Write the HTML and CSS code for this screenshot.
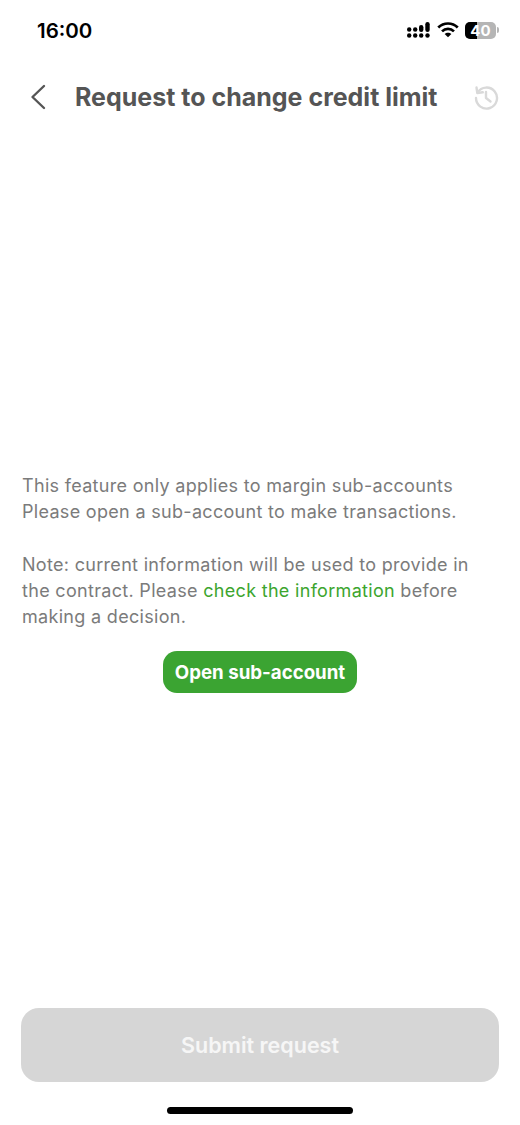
FILE: index.html
```html
<!DOCTYPE html>
<html lang="en">
<head>
    <meta charset="UTF-8">
    <meta name="viewport" content="width=device-width, initial-scale=1.0">
    <title>Request to change credit limit</title>
    <link rel="stylesheet" href="styles.css">
</head>
<body>
    <div class="screen">
        <div class="status">
            <span class="clock">16:00</span>
            <div class="status-icons">
                <svg class="signal" width="23" height="16" viewBox="0 0 23 16" fill="#000">
                    <circle cx="2.200" cy="13.500" r="2.200"/><circle cx="8.200" cy="13.500" r="2.200"/><circle cx="14.200" cy="13.500" r="2.200"/><circle cx="20.500" cy="13.500" r="2.200"/>
                    <circle cx="2.200" cy="7.500" r="2.200"/><circle cx="8.200" cy="7.500" r="2.200"/>
                    <rect x="12" y="3" width="4.400" height="7" rx="2.200"/>
                    <rect x="18.300" y="0" width="4.400" height="10" rx="2.200"/>
                </svg>
                <svg class="wifi" width="22" height="16" viewBox="0 0 21 15" fill="none" stroke="#000" stroke-width="2.600">
                    <path d="M1.200 5.200C6.500 0 14.500 0 19.800 5.200"/>
                    <path d="M4.800 8.800C8 5.700 13 5.700 16.200 8.800"/>
                    <path d="M10.500 14.500L7.300 11.400C9 9.700 12 9.700 13.700 11.400Z" fill="#000" stroke="none"/>
                </svg>
                <div class="battery">
                    <div class="battery-fill"></div>
                    <span class="battery-num">40</span>
                </div>
                <div class="battery-cap"></div>
            </div>
        </div>

        <div class="nav">
            <svg class="back" width="16" height="26" viewBox="0 0 16 26" fill="none" stroke="#555" stroke-width="2.400" stroke-linecap="round" stroke-linejoin="round">
                <path d="M14 2L2.500 13L14 24"/>
            </svg>
            <div class="title">Request to change credit limit</div>
            <svg class="history" width="26" height="26" viewBox="0 0 26 26" fill="none" stroke="#d9d9d9" stroke-width="2.400" stroke-linecap="round" stroke-linejoin="round">
                <path d="M4.600 8.500A10.500 10.500 0 1 1 3 14"/>
                <path d="M3.500 3.500L4.300 9L9.800 8.300"/>
                <path d="M13 8V14L17.500 17.500"/>
            </svg>
        </div>

        <div class="main">
            <p class="msg">This feature only applies to margin sub-accounts<br>Please open a sub-account to make transactions.</p>
            <p class="msg">Note: current information will be used to provide in the contract. Please <span class="link">check the information</span> before making a decision.</p>
            <button class="open-btn">Open sub-account</button>
        </div>

        <div class="footer">
            <button class="submit-btn">Submit request</button>
            <div class="home-bar"></div>
        </div>
    </div>
</body>
</html>
```

FILE: styles.css
```css
*{
    box-sizing:border-box;
}
html,body{
    margin:0;
    padding:0;
    background:#fff;
}
.screen{
    width:520px;
    height:1125px;
    display:flex;
    flex-flow:column nowrap;
    font-family:Inter,"Liberation Sans",sans-serif;
    overflow:hidden;
}
.status{
    height:60px;
    padding:0 21px 0 37px;
    display:flex;
    justify-content:space-between;
    align-items:center;
}
.clock{
    font-size:20.500px;
    font-weight:600;
    color:#000;
}
.status-icons{
    display:flex;
    align-items:center;
}
.signal{
    margin-right:7px;
}
.wifi{
    margin-right:6px;
}
.battery{
    width:31px;
    height:17px;
    border-radius:5px;
    background:#b5b5b5;
    display:flex;
    align-items:center;
    justify-content:center;
    position:relative;
    overflow:hidden;
}
.battery-fill{
    position:absolute;
    left:0;
    top:0;
    bottom:0;
    width:12px;
    background:#000;
}
.battery-num{
    position:relative;
    font-size:15px;
    font-weight:700;
    color:#fff;
}
.battery-cap{
    width:2px;
    height:6px;
    margin-left:1px;
    border-radius:0 2px 2px 0;
    background:#b5b5b5;
}
.nav{
    height:74px;
    padding:0 21px 0 30px;
    display:flex;
    align-items:center;
}
.back{
    flex:none;
}
.title{
    margin-left:29px;
    flex:1;
    font-size:25px;
    font-weight:700;
    color:#555;
    white-space:nowrap;
}
.history{
    flex:none;
}
.main{
    padding:339px 22px 0;
    flex:1;
    display:flex;
    flex-flow:column nowrap;
}
.msg{
    margin:0 0 26px;
    padding-right:28px;
    font-size:18px;
    line-height:26.300px;
    letter-spacing:0.310px;
    color:#7b7b7b;
}
.link{
    color:#3ca52e;
}
.open-btn{
    align-self:center;
    margin-top:-5px;
    padding:1px 0 0;
    height:42px;
    width:194px;
    border:none;
    border-radius:14px;
    background:#3ba432;
    color:#fff;
    font-family:inherit;
    font-size:18.700px;
    font-weight:700;
    white-space:nowrap;
}
.footer{
    padding:0 21px;
    display:flex;
    flex-flow:column nowrap;
    align-items:center;
}
.submit-btn{
    width:100%;
    height:74px;
    border:none;
    border-radius:18px;
    background:#d6d6d6;
    color:#f6f6f6;
    font-family:inherit;
    font-size:21.500px;
    font-weight:600;
}
.home-bar{
    margin:25px 0 11px;
    width:186px;
    height:7px;
    border-radius:4px;
    background:#000;
}
```
